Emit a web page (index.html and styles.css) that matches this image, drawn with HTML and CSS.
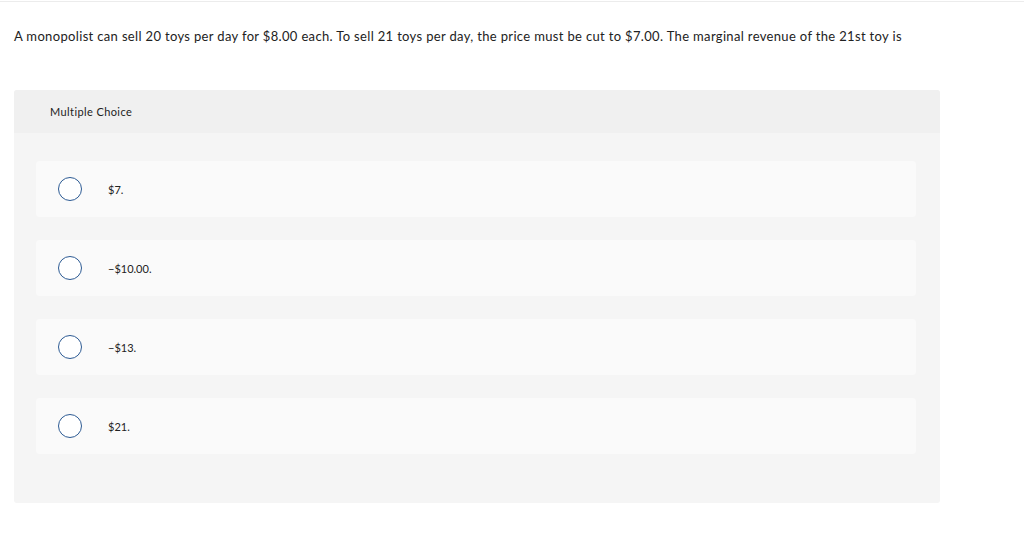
FILE: index.html
```html
<!DOCTYPE html>
<html>
<head>
<meta charset="utf-8">
<link rel="stylesheet" href="styles.css">
</head>
<body>
<div class="topline"></div>
<main class="page">
  <p class="question">A monopolist can sell 20 toys per day for $8.00 each. To sell 21 toys per day, the price must be cut to $7.00. The marginal revenue of the 21st toy is</p>
  <section class="panel">
    <div class="panel-head">Multiple Choice</div>
    <div class="panel-body">
      <label class="option"><span class="radio"></span><span class="opt-text">$7.</span></label>
      <label class="option"><span class="radio"></span><span class="opt-text">&minus;$10.00.</span></label>
      <label class="option"><span class="radio"></span><span class="opt-text">&minus;$13.</span></label>
      <label class="option"><span class="radio"></span><span class="opt-text">$21.</span></label>
    </div>
  </section>
</main>
</body>
</html>
```

FILE: styles.css
```css
* { box-sizing: border-box; }
html, body { margin: 0; padding: 0; background: #fff; }
body {
  font-family: "Lato", "Liberation Sans", Arial, sans-serif;
  color: #222;
}
.topline {
  height: 2px;
  border-bottom: 1px solid #ececec;
  background: #fff;
}
.page {
  padding: 0 84px 0 14px;
}
.question {
  margin: 0;
  padding-top: 25px;
  font-size: 13px;
  line-height: 18px;
  letter-spacing: 0.34px;
}
.panel {
  margin-top: 45px;
  width: 926px;
  border-radius: 3px;
  overflow: hidden;
  background: #f5f5f5;
}
.panel-head {
  height: 43px;
  background: #f0f0f0;
  padding-left: 36px;
  display: flex;
  align-items: center;
  font-size: 11px;
  letter-spacing: 0.4px;
}
.panel-body {
  padding: 28px 24px 49px 22px;
  display: flex;
  flex-direction: column;
  gap: 23px;
}
.option {
  height: 56px;
  background: #fafafa;
  border-radius: 4px;
  display: flex;
  align-items: center;
  padding-left: 22px;
}
.radio {
  width: 24px;
  height: 24px;
  border: 1px solid #2c5a93;
  border-radius: 50%;
  background: #fff;
  flex: none;
}
.opt-text {
  margin-left: 26px;
  font-size: 11px;
}
```
